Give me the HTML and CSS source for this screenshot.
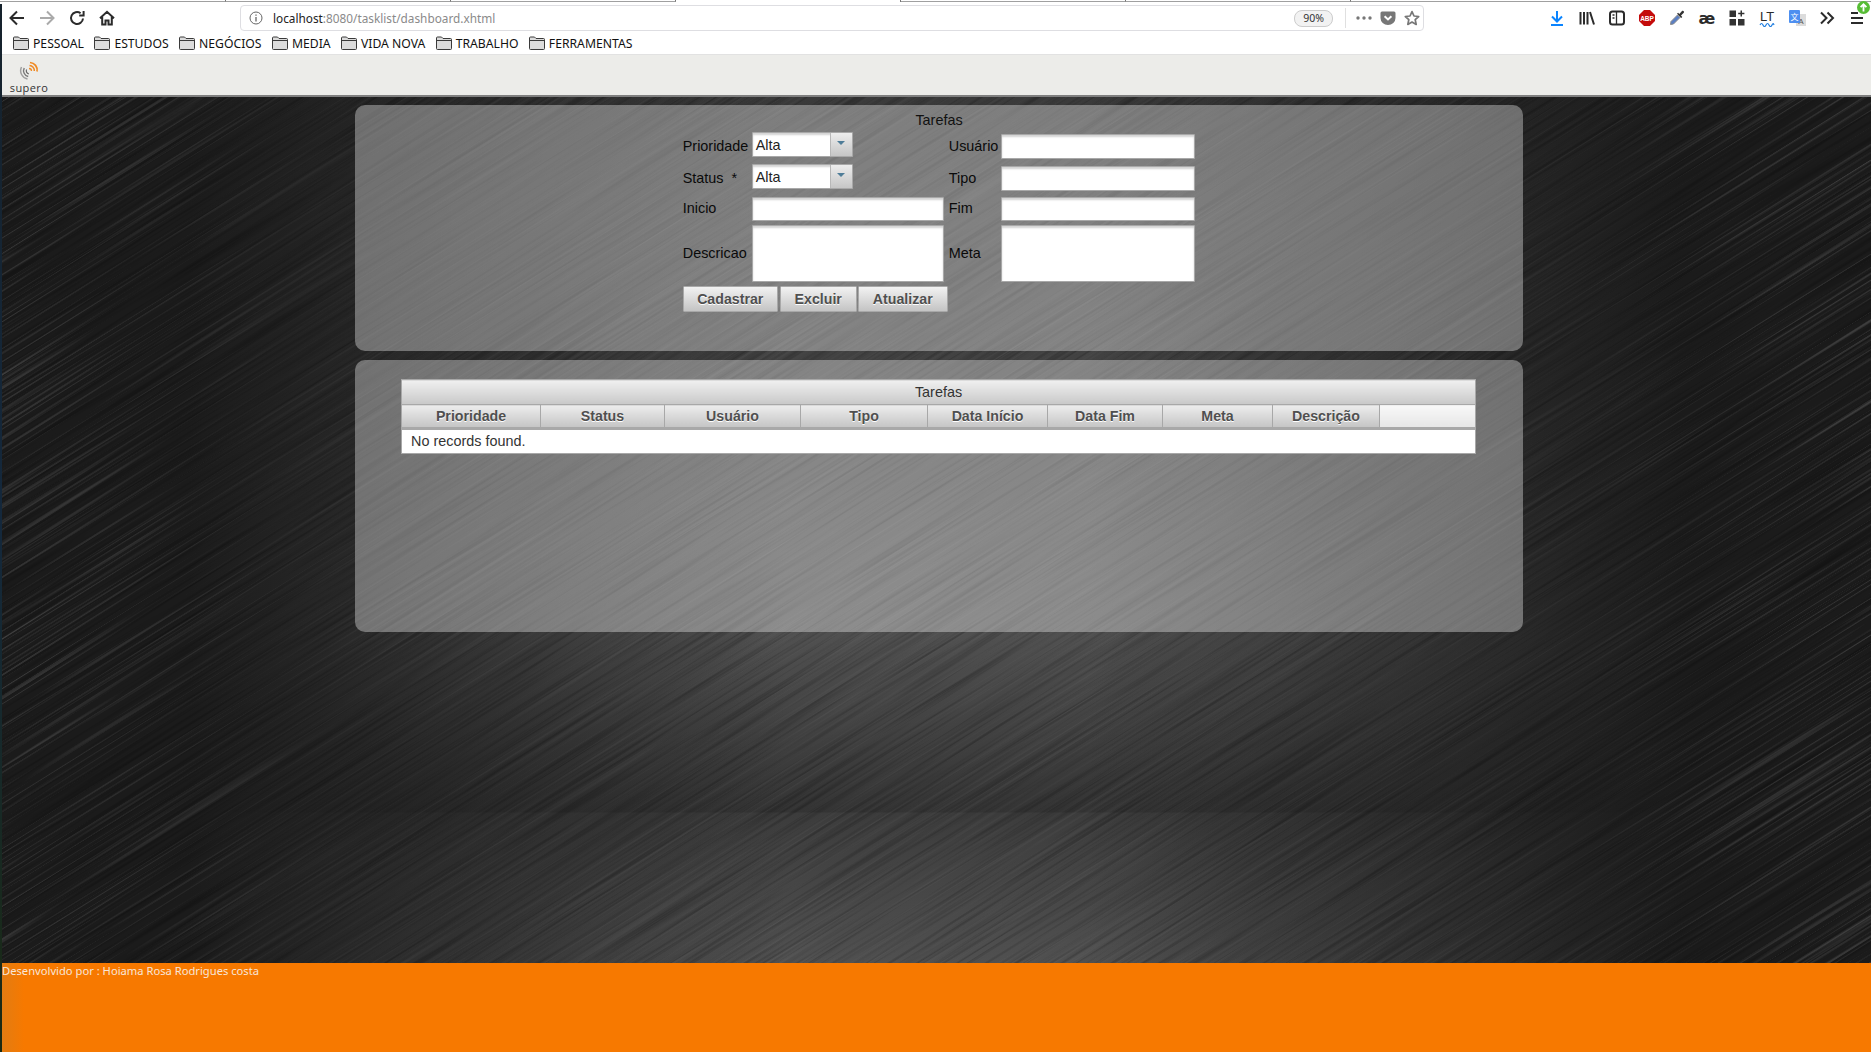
FILE: index.html
```html
<!DOCTYPE html>
<html lang="en">
<head>
    <meta charset="UTF-8">
    <title>Tarefas</title>
    <link rel="stylesheet" href="styles.css">
</head>
<body>
    <div class="window">
        <div class="tab-strip">
            <span class="tab-cell tab-first"></span>
            <span class="tab-cell"></span>
            <span class="tab-cell"></span>
            <span class="tab-cell tab-active"></span>
            <span class="tab-cell"></span>
            <span class="tab-cell"></span>
            <span class="tab-rest"></span>
        </div>

        <div class="toolbar">
            <span class="tool"><svg width="16" height="16" viewBox="0 0 16 16" class="line dark"><path d="M1.5 8H15M8 1.5L1.5 8L8 14.5"/></svg></span>
            <span class="tool"><svg width="16" height="16" viewBox="0 0 16 16" class="line faded"><path d="M14.5 8H1M8 1.5L14.5 8L8 14.5"/></svg></span>
            <span class="tool"><svg width="16" height="16" viewBox="0 0 16 16" class="line dark"><path d="M14 8.5A6 6 0 1 1 11.6 3.2M14.6 1v4.4h-4.4"/></svg></span>
            <span class="tool"><svg width="16" height="16" viewBox="0 0 16 16" class="line dark"><path d="M1 8.2L8 1.8L15 8.2M3.2 7v7.6h3.3v-4h3v4h3.3V7"/></svg></span>

            <div class="urlbar">
                <svg class="url-info" width="14" height="14" viewBox="0 0 14 14"><circle cx="7" cy="7" r="6" fill="none" stroke="#666" stroke-width="1"/><path d="M7 6v4.4M7 3.4v1.4" stroke="#666" stroke-width="1.3"/></svg>
                <span class="url-text"><span class="url-host">localhost</span>:8080/tasklist/dashboard.xhtml</span>
                <span class="zoom-pill">90%</span>
                <span class="url-sep"></span>
                <svg class="url-dots" width="16" height="4" viewBox="0 0 16 4"><circle cx="2" cy="2" r="1.7"/><circle cx="8" cy="2" r="1.7"/><circle cx="14" cy="2" r="1.7"/></svg>
                <svg class="url-pocket" width="16" height="16" viewBox="0 0 16 16"><path d="M2 1.5h12a1.5 1.5 0 0 1 1.5 1.5v5a7.5 7 0 0 1-15 0V3A1.5 1.5 0 0 1 2 1.5z" fill="#777"/><path d="M4.6 6.2L8 9.4l3.4-3.2" fill="none" stroke="#fff" stroke-width="2"/></svg>
                <svg class="url-star" width="16" height="16" viewBox="0 0 16 16"><path d="M8 1.6l2 4.4 4.7.5-3.5 3.2 1 4.7L8 12l-4.2 2.4 1-4.7L1.3 6.5 6 6z" fill="none" stroke="#777" stroke-width="1.7" stroke-linejoin="round"/></svg>
            </div>

            <div class="nav-icons">
                <span class="tool"><svg width="16" height="16" viewBox="0 0 16 16" class="line blue"><path d="M8 1v10M3 6.5L8 11.5L13 6.5M2 15h12"/></svg></span>
                <span class="tool"><svg width="16" height="16" viewBox="0 0 16 16" class="line dark"><path d="M1.5 2v12.5M5 2v12.5M8.5 2v12.5M11 2l4 12.5"/></svg></span>
                <span class="tool"><svg width="16" height="16" viewBox="0 0 16 16" class="line dark"><rect x="1" y="1.5" width="14" height="13" rx="2.5"/><path d="M7.5 1.5v13M3.5 5h2M3.5 8h2" stroke-width="1.3"/></svg></span>
                <span class="tool"><svg width="16" height="16" viewBox="0 0 16 16"><path d="M5 0h6l5 5v6l-5 5H5l-5-5V5z" fill="#c40b0b"/><text x="8" y="10.6" class="abp-text">ABP</text></svg></span>
                <span class="tool"><svg width="16" height="16" viewBox="0 0 16 16"><path d="M1.5 14.5L2 11.5L8.5 5L11 7.5L4.5 14z" fill="#5a7fc4" stroke="#8a8a8a"/><path d="M8 3.8L12.2 8L13.3 6.9L12 5.6L14.8 2.8C15.6 1.6 14.2 .2 13 1.1L10.3 3.9L9.1 2.7z" fill="#333"/></svg></span>
                <span class="tool ae-glyph">æ</span>
                <span class="tool"><svg width="16" height="16" viewBox="0 0 16 16" fill="#333"><rect x="0.5" y="0.5" width="6.5" height="6.5"/><rect x="0.5" y="9" width="6.5" height="6.5"/><rect x="9" y="9" width="6.5" height="6.5"/><path d="M11.5 .5h1.5v2.3h2.4v1.5H13v2.3h-1.5V4.3H9.2V2.8h2.3z"/></svg></span>
                <span class="tool"><svg width="18" height="18" viewBox="0 0 18 18"><text x="9" y="12" class="lt-text">LT</text><path d="M2 16c1-2 2-2 3 0s2 2 3 0 2-2 3 0 2 2 3 0 1.5-1.5 2 0" fill="none" stroke="#1c7ce0" stroke-width="1.2"/></svg></span>
                <span class="tool"><svg width="17" height="17" viewBox="0 0 17 17"><rect x="7" y="4" width="10" height="12" fill="#dcdcdc"/><text x="12" y="13.5" class="tr-latin">A</text><rect x="0" y="0" width="11" height="13" rx="1" fill="#4d8ff0"/><text x="5.5" y="9.8" class="tr-cjk">文</text></svg></span>
                <span class="tool"><svg width="16" height="16" viewBox="0 0 16 16" class="line dark"><path d="M2 2.5L7.5 8L2 13.5M8.5 2.5L14 8L8.5 13.5"/></svg></span>
                <span class="tool menu-tool">
                    <svg width="16" height="16" viewBox="0 0 16 16" class="line dark"><path d="M2 3h7M2 8h12M2 13h12"/></svg>
                    <svg class="update-badge" width="13" height="13" viewBox="0 0 13 13"><circle cx="6.5" cy="6.5" r="6.5" fill="#57bd35"/><path d="M6.5 10.5V3.5M3.6 6.2L6.5 3.3L9.4 6.2" fill="none" stroke="#fff" stroke-width="1.8"/></svg>
                </span>
            </div>
        </div>

        <div class="bookmarks">
            <span class="bookmark"><svg class="folder" width="16" height="14" viewBox="0 0 16 14"><path d="M.5 2a1 1 0 0 1 1-1h4l1.5 1.5h7.5a1 1 0 0 1 1 1V12.5a1 1 0 0 1-1 1h-13a1 1 0 0 1-1-1z"/><path d="M.5 4.5h15"/></svg>PESSOAL</span>
            <span class="bookmark"><svg class="folder" width="16" height="14" viewBox="0 0 16 14"><path d="M.5 2a1 1 0 0 1 1-1h4l1.5 1.5h7.5a1 1 0 0 1 1 1V12.5a1 1 0 0 1-1 1h-13a1 1 0 0 1-1-1z"/><path d="M.5 4.5h15"/></svg>ESTUDOS</span>
            <span class="bookmark"><svg class="folder" width="16" height="14" viewBox="0 0 16 14"><path d="M.5 2a1 1 0 0 1 1-1h4l1.5 1.5h7.5a1 1 0 0 1 1 1V12.5a1 1 0 0 1-1 1h-13a1 1 0 0 1-1-1z"/><path d="M.5 4.5h15"/></svg>NEGÓCIOS</span>
            <span class="bookmark"><svg class="folder" width="16" height="14" viewBox="0 0 16 14"><path d="M.5 2a1 1 0 0 1 1-1h4l1.5 1.5h7.5a1 1 0 0 1 1 1V12.5a1 1 0 0 1-1 1h-13a1 1 0 0 1-1-1z"/><path d="M.5 4.5h15"/></svg>MEDIA</span>
            <span class="bookmark"><svg class="folder" width="16" height="14" viewBox="0 0 16 14"><path d="M.5 2a1 1 0 0 1 1-1h4l1.5 1.5h7.5a1 1 0 0 1 1 1V12.5a1 1 0 0 1-1 1h-13a1 1 0 0 1-1-1z"/><path d="M.5 4.5h15"/></svg>VIDA NOVA</span>
            <span class="bookmark"><svg class="folder" width="16" height="14" viewBox="0 0 16 14"><path d="M.5 2a1 1 0 0 1 1-1h4l1.5 1.5h7.5a1 1 0 0 1 1 1V12.5a1 1 0 0 1-1 1h-13a1 1 0 0 1-1-1z"/><path d="M.5 4.5h15"/></svg>TRABALHO</span>
            <span class="bookmark"><svg class="folder" width="16" height="14" viewBox="0 0 16 14"><path d="M.5 2a1 1 0 0 1 1-1h4l1.5 1.5h7.5a1 1 0 0 1 1 1V12.5a1 1 0 0 1-1 1h-13a1 1 0 0 1-1-1z"/><path d="M.5 4.5h15"/></svg>FERRAMENTAS</span>
        </div>

        <div class="app-header">
            <div class="logo">
                <svg width="20" height="20" viewBox="0 0 20 20" fill="none">
                    <path d="M11 1.5a7.5 7.5 0 0 1 7 9" stroke="#f08a24" stroke-width="1.7"/>
                    <path d="M10.5 4.5a5 5 0 0 1 4.8 5.5" stroke="#f08a24" stroke-width="1.5"/>
                    <path d="M10 7.5a2.5 2.5 0 0 1 2.5 2.5" stroke="#f08a24" stroke-width="1.3"/>
                    <path d="M2.5 6a8.5 8.5 0 0 0 6 12" stroke="#a0a0a0" stroke-width="1.5"/>
                    <path d="M5.2 7a6 6 0 0 0 4 8.5" stroke="#777" stroke-width="1.4"/>
                    <path d="M7.6 8.5a3 3 0 0 0 2.2 4.3" stroke="#666" stroke-width="1.2"/>
                </svg>
                <span class="logo-text">supero</span>
            </div>
        </div>

        <div class="wall">
            <svg class="texture" width="100%" height="100%">
                <defs>
                    <filter id="brushed" x="0" y="0" width="100%" height="100%">
                        <feTurbulence type="fractalNoise" baseFrequency="0.005 0.32" numOctaves="3" seed="7"/>
                        <feColorMatrix type="matrix" values="0 0 0 0 0  0 0 0 0 0  0 0 0 0 0  3 0 0 0 -1.4"/>
                    </filter>
                    <filter id="streaks" x="0" y="0" width="100%" height="100%">
                        <feTurbulence type="fractalNoise" baseFrequency="0.003 0.45" numOctaves="2" seed="21"/>
                        <feColorMatrix type="matrix" values="0 0 0 0 1  0 0 0 0 1  0 0 0 0 1  0 3.5 0 0 -1.8"/>
                    </filter>
                </defs>
                <g transform="rotate(-32 936 433)">
                    <rect x="-500" y="-800" width="2900" height="2500" filter="url(#brushed)" opacity=".22"/>
                    <rect x="-500" y="-800" width="2900" height="2500" filter="url(#streaks)" opacity=".04"/>
                </g>
            </svg>
            <svg class="texture texture-edges" width="100%" height="100%">
                <g transform="rotate(-32 936 433)">
                    <rect x="-500" y="-800" width="2900" height="2500" filter="url(#streaks)" opacity=".12"/>
                </g>
            </svg>

            <div class="content">
                <form class="panel panel-form">
                    <div class="panel-title">Tarefas</div>
                    <div class="form-grid">
                        <label class="lbl">Prioridade</label>
                        <div class="select">
                            <span class="select-label">Alta</span>
                            <span class="select-trigger"><span class="select-arrow"></span></span>
                        </div>
                        <label class="lbl">Usuário</label>
                        <input class="field field-right" type="text">

                        <label class="lbl">Status &nbsp;*</label>
                        <div class="select">
                            <span class="select-label">Alta</span>
                            <span class="select-trigger"><span class="select-arrow"></span></span>
                        </div>
                        <label class="lbl">Tipo</label>
                        <input class="field field-right" type="text">

                        <label class="lbl lbl-short">Inicio</label>
                        <input class="field field-short" type="text">
                        <label class="lbl lbl-short">Fim</label>
                        <input class="field field-short field-wide" type="text">

                        <label class="lbl lbl-tall">Descricao</label>
                        <textarea class="field field-tall"></textarea>
                        <label class="lbl lbl-tall">Meta</label>
                        <textarea class="field field-tall field-wide"></textarea>

                        <div class="button-row">
                            <button type="button" class="btn btn-save">Cadastrar</button>
                            <button type="button" class="btn btn-delete">Excluir</button>
                            <button type="button" class="btn btn-update">Atualizar</button>
                        </div>
                    </div>
                </form>

                <div class="panel panel-table">
                    <table class="datatable">
                        <colgroup>
                            <col class="col-priority">
                            <col class="col-status">
                            <col class="col-user">
                            <col class="col-type">
                            <col class="col-start">
                            <col class="col-end">
                            <col class="col-goal">
                            <col class="col-desc">
                            <col>
                        </colgroup>
                        <thead>
                            <tr><th class="table-caption" colspan="9">Tarefas</th></tr>
                            <tr class="table-head">
                                <th>Prioridade</th>
                                <th>Status</th>
                                <th>Usuário</th>
                                <th>Tipo</th>
                                <th>Data Início</th>
                                <th>Data Fim</th>
                                <th>Meta</th>
                                <th>Descrição</th>
                                <th class="head-empty"></th>
                            </tr>
                        </thead>
                        <tbody>
                            <tr><td class="empty-row" colspan="9">No records found.</td></tr>
                        </tbody>
                    </table>
                </div>
            </div>
        </div>

        <div class="footer">Desenvolvido por : Hoiama Rosa Rodrigues costa</div>
    </div>
</body>
</html>
```

FILE: styles.css
```css
html, body {
    height: 100%;
    margin: 0;
}

body {
    background: linear-gradient(180deg, #16222c 0%, #14283c 50%, #1a2a12 100%);
    overflow: hidden;
    padding-left: 2px;
    box-sizing: border-box;
    font-family: "Liberation Sans", Arial, sans-serif;
    font-size: 14.4px;
}

.window {
    height: 100vh;
    display: flex;
    flex-direction: column;
}

/* browser chrome */
.tab-strip {
    height: 4px;
    display: flex;
    background: #fff;
    margin-left: -2px;
}

.tab-cell {
    width: 225px;
    height: 2px;
    box-sizing: border-box;
    border-bottom: 1px solid #a0a0a0;
    border-right: 1px solid #777;
}

.tab-first {
    width: 226px;
}

.tab-active {
    border-bottom: none;
}

.tab-rest {
    flex: 1;
    height: 2px;
    box-sizing: border-box;
    border-bottom: 1px solid #a0a0a0;
}

.toolbar {
    height: 28px;
    display: flex;
    align-items: center;
    background: #fff;
}

.tool {
    width: 30px;
    height: 20px;
    flex: none;
    display: flex;
    align-items: center;
    justify-content: center;
}

.line {
    fill: none;
    stroke-width: 2;
}

.dark {
    stroke: #2b2b2b;
}

.faded {
    stroke: #aaa;
}

.blue {
    stroke: #0a84ff;
}

.urlbar {
    flex: 1;
    height: 26px;
    margin: 0 118px;
    box-sizing: border-box;
    display: flex;
    align-items: center;
    border: 1px solid #dedee2;
    border-radius: 4px;
    font-family: "Noto Sans", "Open Sans", sans-serif;
    font-size: 11.8px;
    color: #8a8a8a;
}

.url-info {
    margin-left: 8px;
    flex: none;
}

.url-text {
    margin-left: 10px;
    flex: 1;
}

.url-host {
    color: #222;
}

.zoom-pill {
    width: 37px;
    height: 15px;
    line-height: 14px;
    border: 1px solid #ccc;
    border-radius: 8px;
    background: #f2f2f2;
    color: #333;
    font-size: 10.5px;
    text-align: center;
}

.url-sep {
    width: 1px;
    height: 20px;
    background: #e0e0e0;
    margin-left: 12px;
}

.url-dots {
    fill: #777;
    margin-left: 10px;
}

.url-pocket {
    margin-left: 8px;
}

.url-star {
    margin-left: 8px;
    margin-right: 3px;
}

.nav-icons {
    display: flex;
    margin-left: -118px;
    margin-right: -1px;
    padding-left: 118px;
}

.abp-text {
    font-family: "Liberation Sans", sans-serif;
    font-size: 6.5px;
    font-weight: bold;
    fill: #fff;
    text-anchor: middle;
}

.ae-glyph {
    font-family: "DejaVu Sans", sans-serif;
    font-size: 16px;
    font-weight: bold;
    color: #2b2b2b;
}

.lt-text {
    font-family: "Liberation Sans", sans-serif;
    font-size: 13px;
    fill: #2b2b2b;
    text-anchor: middle;
}

.tr-latin {
    font-family: "Liberation Sans", sans-serif;
    font-size: 8px;
    fill: #555;
    text-anchor: middle;
}

.tr-cjk {
    font-family: "Noto Sans CJK SC", sans-serif;
    font-size: 8px;
    fill: #fff;
    text-anchor: middle;
}

.menu-tool {
    position: relative;
}

.update-badge {
    position: absolute;
    top: -7px;
    right: 2px;
}

.bookmarks {
    height: 23px;
    box-sizing: border-box;
    display: flex;
    align-items: center;
    padding-left: 11px;
    background: #fff;
    border-bottom: 1px solid #e2e2e2;
    font-family: "Noto Sans", "Open Sans", sans-serif;
    font-size: 12.2px;
    color: #111;
}

.bookmark {
    display: flex;
    align-items: center;
    gap: 4px;
    margin-right: 10.4px;
    white-space: nowrap;
}

.folder {
    fill: #dcdcdc;
    stroke: #3a3a3a;
}

.folder path + path {
    fill: none;
}

/* app header */
.app-header {
    height: 42px;
    box-sizing: border-box;
    flex: none;
    background: #ecece9;
    border-bottom: 2px solid #7f7f7f;
}

.logo {
    width: 42px;
    display: flex;
    flex-direction: column;
    align-items: center;
    padding-top: 6px;
    margin-left: 6px;
}

.logo svg {
    display: block;
}

.logo-text {
    font-family: "Open Sans", "Noto Sans", sans-serif;
    font-size: 11px;
    letter-spacing: .4px;
    line-height: 13px;
    color: #333;
}

/* brushed metal page */
.wall {
    flex: 1;
    position: relative;
    overflow: hidden;
    background:
        linear-gradient(90deg, #1b1b1b 0, #1b1b1b 10%, rgba(27, 27, 27, 0) 42%, rgba(27, 27, 27, 0) 58%, #1b1b1b 90%, #1b1b1b 100%),
        linear-gradient(180deg, #3a3a3a 0, #424242 260px, #505050 540px, #343434 715px, #3c3c3c 716px, #505050 866px);
}

.texture {
    position: absolute;
    top: 0;
    left: 0;
}

.texture-edges {
    -webkit-mask-image: linear-gradient(90deg, #000 0, transparent 16%, transparent 84%, #000 100%);
    mask-image: linear-gradient(90deg, #000 0, transparent 16%, transparent 84%, #000 100%);
}

.content {
    position: relative;
    width: 1168px;
    margin: 8px 0 0 353px;
}

.panel {
    background: rgba(255, 255, 255, 0.35);
    border-radius: 10px;
}

.panel-form {
    display: block;
    height: 246px;
    box-sizing: border-box;
    padding-top: 7px;
    margin-bottom: 9px;
}

.panel-title {
    height: 20px;
    line-height: 16px;
    text-align: center;
    color: #111;
}

.form-grid {
    width: 512.5px;
    margin: 0 auto;
    display: grid;
    grid-template-columns: 69px 197px 52.5px 194px;
    grid-template-rows: 32px 33px 28px 61px auto;
    align-items: start;
}

.lbl {
    height: 28px;
    display: flex;
    align-items: center;
    color: #0a0a0a;
    white-space: nowrap;
}

.lbl-short {
    height: 22px;
}

.lbl-tall {
    height: 56px;
}

.field {
    display: block;
    width: 192px;
    height: 25px;
    box-sizing: border-box;
    margin: 0;
    padding: 2px 3px;
    border: 1px solid #a8a8a8;
    border-radius: 1px;
    background: #fff;
    box-shadow: inset 0 2px 2px #8f8f8f66;
    font-family: inherit;
    font-size: 14px;
    resize: none;
}

.field-right {
    width: 194px;
    margin-top: 2px;
}

.field-wide {
    width: 194px;
}

.field-short {
    height: 24px;
}

.field-tall {
    height: 57px;
}

.select {
    width: 101px;
    height: 25px;
    box-sizing: border-box;
    display: flex;
    border: 1px solid #a8a8a8;
    border-radius: 1px;
    background: #fff;
    box-shadow: inset 0 2px 2px #8f8f8f66;
}

.select-label {
    flex: 1;
    padding-left: 3px;
    line-height: 24px;
    color: #222;
}

.select-trigger {
    width: 21px;
    display: flex;
    align-items: center;
    justify-content: center;
    border-left: 1px solid #b8b8b8;
    background: linear-gradient(180deg, #ededed, #c6c6c6);
}

.select-arrow {
    border-left: 4px solid transparent;
    border-right: 4px solid transparent;
    border-top: 4px solid #4f7d98;
    margin-top: -3px;
}

.button-row {
    grid-column: 1 / -1;
    display: flex;
}

.btn {
    height: 26px;
    padding: 0;
    border: 1px solid #a8a8a8;
    border-radius: 1px;
    background: linear-gradient(180deg, #f2f2f2, #c4c4c4);
    color: #4f4f4f;
    font-family: inherit;
    font-size: 14.2px;
    font-weight: bold;
    text-shadow: 0 1px 0 #fff;
}

.btn-save {
    width: 95px;
    margin-right: 2px;
}

.btn-delete {
    width: 77px;
    margin-right: 1px;
}

.btn-update {
    width: 90px;
}

.panel-table {
    height: 272px;
    box-sizing: border-box;
    padding: 19px 47px 0 46px;
}

.datatable {
    width: 1075px;
    table-layout: fixed;
    border-collapse: collapse;
    background: #fff;
    border: 1px solid #a8a8a8;
}

.col-priority { width: 139px; }
.col-status { width: 124px; }
.col-user { width: 136px; }
.col-type { width: 127px; }
.col-start { width: 120px; }
.col-end { width: 115px; }
.col-goal { width: 110px; }
.col-desc { width: 107px; }

.table-caption {
    height: 24px;
    padding: 0;
    border-bottom: 1px solid #a8a8a8;
    background: linear-gradient(180deg, #f0f0f0, #c8c8c8);
    color: #333;
    font-weight: normal;
    text-align: center;
}

.table-head th {
    height: 24px;
    padding: 0 0 1px;
    box-sizing: border-box;
    border-right: 1px solid #a8a8a8;
    border-bottom: 3px solid #a8a8a8;
    background: linear-gradient(180deg, #ededed, #c4c4c4);
    color: #4f4f4f;
    font-size: 14.2px;
    font-weight: bold;
    text-shadow: 0 1px 0 #fff;
    text-align: center;
}

.table-head .head-empty {
    border-right: none;
    background: linear-gradient(180deg, #f8f8f8, #e6e6e6);
}

.empty-row {
    height: 21px;
    padding: 0 0 2px 9px;
    color: #333;
}

/* footer */
.footer {
    height: 89px;
    flex: none;
    background: linear-gradient(90deg, #e27c12 0, #f77900 22px);
    color: #f8e6d8;
    font-family: "Noto Sans", "Open Sans", sans-serif;
    font-size: 11.2px;
    line-height: 16px;
}
```
